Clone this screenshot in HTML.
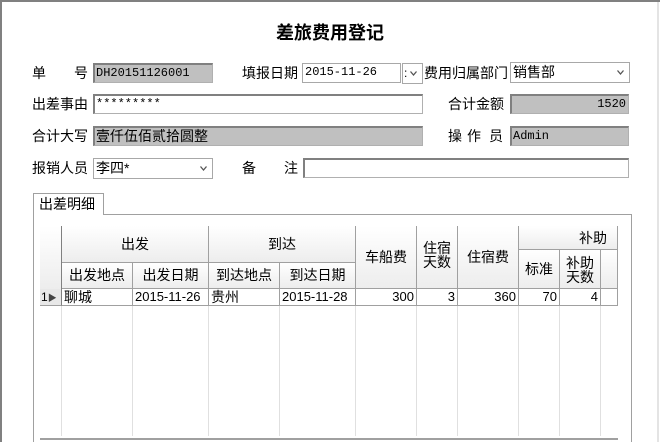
<!DOCTYPE html>
<html><head><meta charset="utf-8"><style>
*{margin:0;padding:0;box-sizing:border-box}
html,body{width:660px;height:442px;overflow:hidden}
body{background:#fff;position:relative;font-family:"Liberation Sans","Noto Sans CJK SC",sans-serif;font-size:14px;color:#000}
.a{position:absolute;white-space:nowrap}
.lbl{position:absolute;font-size:14px;line-height:20px}
.in{position:absolute;height:20px;border:1px solid #b0b0b0;border-top:2px solid #808080;border-left:2px solid #808080;font-size:12px;line-height:17px;padding-left:1px;background:#fff;font-family:"Liberation Mono","Noto Sans CJK SC",monospace;overflow:hidden;white-space:nowrap}
.g{background:#c0c0c0}
.sel{position:absolute;height:21px;border:1px solid #a8a8a8;font-size:14px;line-height:19px;padding-left:2px;background:#fff}
.sel svg{position:absolute;right:5px;top:7px}
.hd{position:absolute;background:linear-gradient(#fff,#ededed);border-right:1px solid #a0a0a0;border-bottom:1px solid #a0a0a0;font-size:14px;text-align:center;white-space:nowrap}
.vl{position:absolute;width:1px;background:#e0e0e0}
.cell{position:absolute;top:289px;height:17px;font-size:13px;line-height:16px;border-right:1px solid #a0a0a0;border-bottom:1px solid #a0a0a0;padding:0 2px;white-space:nowrap;overflow:hidden}
.r{text-align:right}
</style></head><body>
<div class="a" style="left:0;top:0;width:660px;height:2px;background:#808080"></div>
<div class="a" style="left:0;top:0;width:2px;height:442px;background:#808080"></div>
<div class="a" style="left:657px;top:2px;width:2px;height:440px;background:#e4e4e4"></div>
<div class="a" style="left:0;top:20px;width:660px;text-align:center;font-size:18px;font-weight:bold;line-height:24px;font-family:'Noto Sans CJK SC',sans-serif">差旅费用登记</div>

<div class="lbl" style="left:32px;top:63px">单</div><div class="lbl" style="left:74px;top:63px">号</div>
<div class="in g" style="left:93px;top:63px;width:120px">DH20151126001</div>
<div class="lbl" style="left:242px;top:63px">填报日期</div>
<div class="in" style="left:302px;top:63px;width:99px;border:1px solid #a8a8a8;padding-left:2px">2015-11-26</div>
<div class="sel" style="left:402px;top:63px;width:21px"><span style="position:absolute;left:1px;font-size:12px">:</span><svg width="7" height="5"><path d="M0.5 0.5L3.5 4L6.5 0.5" stroke="#555" fill="none" stroke-width="1.3"/></svg></div>
<div class="lbl" style="left:424px;top:63px">费用归属部门</div>
<div class="sel" style="left:510px;top:62px;width:120px">销售部<svg width="7" height="5"><path d="M0.5 0.5L3.5 4L6.5 0.5" stroke="#555" fill="none" stroke-width="1.3"/></svg></div>

<div class="lbl" style="left:32px;top:94px">出差事由</div>
<div class="in" style="left:93px;top:94px;width:330px">*********</div>
<div class="lbl" style="left:448px;top:94px">合计金额</div>
<div class="in g r" style="left:510px;top:94px;width:119px;padding-right:2px">1520</div>

<div class="lbl" style="left:32px;top:126px">合计大写</div>
<div class="in g" style="left:93px;top:126px;width:330px;font-size:14px;font-family:'Noto Sans CJK SC',sans-serif">壹仟伍佰贰拾圆整</div>
<div class="lbl" style="left:448px;top:126px">操</div><div class="lbl" style="left:467px;top:126px">作</div><div class="lbl" style="left:489px;top:126px">员</div>
<div class="in g" style="left:510px;top:126px;width:119px">Admin</div>

<div class="lbl" style="left:32px;top:158px">报销人员</div>
<div class="sel" style="left:93px;top:158px;width:120px">李四*<svg width="7" height="5"><path d="M0.5 0.5L3.5 4L6.5 0.5" stroke="#555" fill="none" stroke-width="1.3"/></svg></div>
<div class="lbl" style="left:242px;top:158px">备</div><div class="lbl" style="left:284px;top:158px">注</div>
<div class="in" style="left:303px;top:158px;width:326px"></div>

<div class="a" style="left:33px;top:193px;width:71px;height:22px;border:1px solid #a0a0a0;border-bottom:none;background:#fff;font-size:14px;line-height:20px;padding-left:5px;z-index:2">出差明细</div>
<div class="a" style="left:33px;top:214px;width:599px;height:240px;border:1px solid #a0a0a0"></div>

<div class="hd" style="left:40px;top:226px;width:22px;height:63px;border-right:1px solid #808080;border-bottom:none"></div>
<div class="hd" style="left:62px;top:226px;width:147px;height:37px;line-height:37px">出发</div>
<div class="hd" style="left:209px;top:226px;width:147px;height:37px;line-height:37px">到达</div>
<div class="hd" style="left:62px;top:263px;width:71px;height:26px;line-height:24px">出发地点</div>
<div class="hd" style="left:133px;top:263px;width:76px;height:26px;line-height:24px">出发日期</div>
<div class="hd" style="left:209px;top:263px;width:71px;height:26px;line-height:24px">到达地点</div>
<div class="hd" style="left:280px;top:263px;width:76px;height:26px;line-height:24px">到达日期</div>
<div class="hd" style="left:356px;top:226px;width:61px;height:63px;line-height:63px">车船费</div>
<div class="hd" style="left:417px;top:226px;width:41px;height:63px;line-height:14px;padding-top:15px">住宿<br>天数</div>
<div class="hd" style="left:458px;top:226px;width:61px;height:63px;line-height:63px">住宿费</div>
<div class="hd" style="left:519px;top:226px;width:99px;height:24px;line-height:24px;text-align:right;padding-right:10px">补助</div>
<div class="hd" style="left:519px;top:250px;width:41px;height:39px;line-height:39px">标准</div>
<div class="hd" style="left:560px;top:250px;width:41px;height:39px;line-height:14px;padding-top:6px">补助<br>天数</div>
<div class="hd" style="left:601px;top:250px;width:17px;height:39px"></div>

<div class="cell" style="left:40px;width:22px;background:#e8e8e8;font-size:12px;padding:0 1px;border-right:1px solid #808080">1<span style="font-size:9px;color:#444">&#9654;</span></div>
<div class="cell" style="left:62px;width:71px;font-family:'Noto Sans CJK SC',sans-serif;font-size:14px">聊城</div>
<div class="cell" style="left:133px;width:76px">2015-11-26</div>
<div class="cell" style="left:209px;width:71px;font-family:'Noto Sans CJK SC',sans-serif;font-size:14px">贵州</div>
<div class="cell" style="left:280px;width:76px">2015-11-28</div>
<div class="cell r" style="left:356px;width:61px">300</div>
<div class="cell r" style="left:417px;width:41px">3</div>
<div class="cell r" style="left:458px;width:61px">360</div>
<div class="cell r" style="left:519px;width:41px">70</div>
<div class="cell r" style="left:560px;width:41px">4</div>
<div class="cell" style="left:601px;width:17px"></div>

<div class="vl" style="left:61px;top:306px;height:130px"></div>
<div class="vl" style="left:132px;top:306px;height:130px"></div>
<div class="vl" style="left:208px;top:306px;height:130px"></div>
<div class="vl" style="left:279px;top:306px;height:130px"></div>
<div class="vl" style="left:355px;top:306px;height:130px"></div>
<div class="vl" style="left:416px;top:306px;height:130px"></div>
<div class="vl" style="left:457px;top:306px;height:130px"></div>
<div class="vl" style="left:518px;top:306px;height:130px"></div>
<div class="vl" style="left:559px;top:306px;height:130px"></div>
<div class="vl" style="left:600px;top:306px;height:130px"></div>
<div class="a" style="left:40px;top:438px;width:578px;height:2px;background:#a0a0a0"></div>
</body></html>
